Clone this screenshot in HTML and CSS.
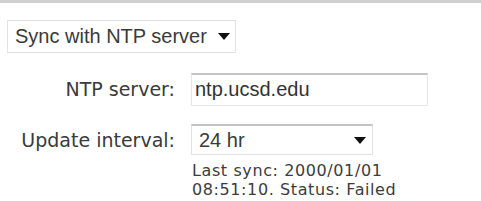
FILE: index.html
```html
<!DOCTYPE html>
<html lang="en">
<head>
    <meta charset="UTF-8">
    <title>Time settings</title>
    <link rel="stylesheet" href="styles.css">
</head>
<body>
    <div class="top-rule"></div>
    <div class="mode-row">
        <div class="dropdown mode-select">
            <span>Sync with NTP server</span>
            <span class="arrow"></span>
        </div>
    </div>
    <div class="settings">
        <label class="field-label">NTP server:</label>
        <div class="text-input">ntp.ucsd.edu</div>

        <label class="field-label">Update interval:</label>
        <div class="interval-cell">
            <div class="dropdown interval-select">
                <span>24 hr</span>
                <span class="arrow"></span>
            </div>
            <p class="sync-note">Last sync: 2000/01/01<br>08:51:10. Status: Failed</p>
        </div>
    </div>
</body>
</html>
```

FILE: styles.css
```css
body {
    margin: 0;
    background: #fff;
    color: #333;
    font-family: "Liberation Sans", Arial, sans-serif;
}

.top-rule {
    height: 3px;
    background: #cfcfcf;
}

.mode-row {
    padding: 17px 0 0 7px;
}

.dropdown {
    display: flex;
    align-items: center;
    justify-content: space-between;
    box-sizing: border-box;
    border: 1px solid #e2e2e2;
    font-size: 20px;
    color: #3a3a3a;
}

.mode-select {
    width: 229px;
    height: 33px;
    padding: 0 5px 0 7px;
}

.arrow {
    width: 0;
    height: 0;
    border-left: 6px solid transparent;
    border-right: 6px solid transparent;
    border-top: 7px solid #111;
}

.settings {
    display: grid;
    grid-template-columns: 175px 237px;
    column-gap: 16px;
    row-gap: 18px;
    margin-top: 20px;
}

.field-label {
    text-align: right;
    font-family: "DejaVu Sans", Verdana, sans-serif;
    font-size: 19px;
    color: #3a3a3a;
    padding-top: 5px;
}

.text-input {
    box-sizing: border-box;
    height: 33px;
    border: 1px solid #e6e6e6;
    border-top: 2px solid #c4c4c4;
    padding: 3px 0 0 3px;
    font-size: 20px;
    color: #333;
}

.interval-select {
    width: 182px;
    height: 31px;
    padding: 0 6px 0 7px;
    border-top: 2px solid #c4c4c4;
}

.sync-note {
    margin: 6px 0 0 1px;
    font-family: "DejaVu Sans", Verdana, sans-serif;
    font-size: 16px;
    letter-spacing: 0.6px;
    line-height: 19px;
    color: #3c3c3c;
}
```
